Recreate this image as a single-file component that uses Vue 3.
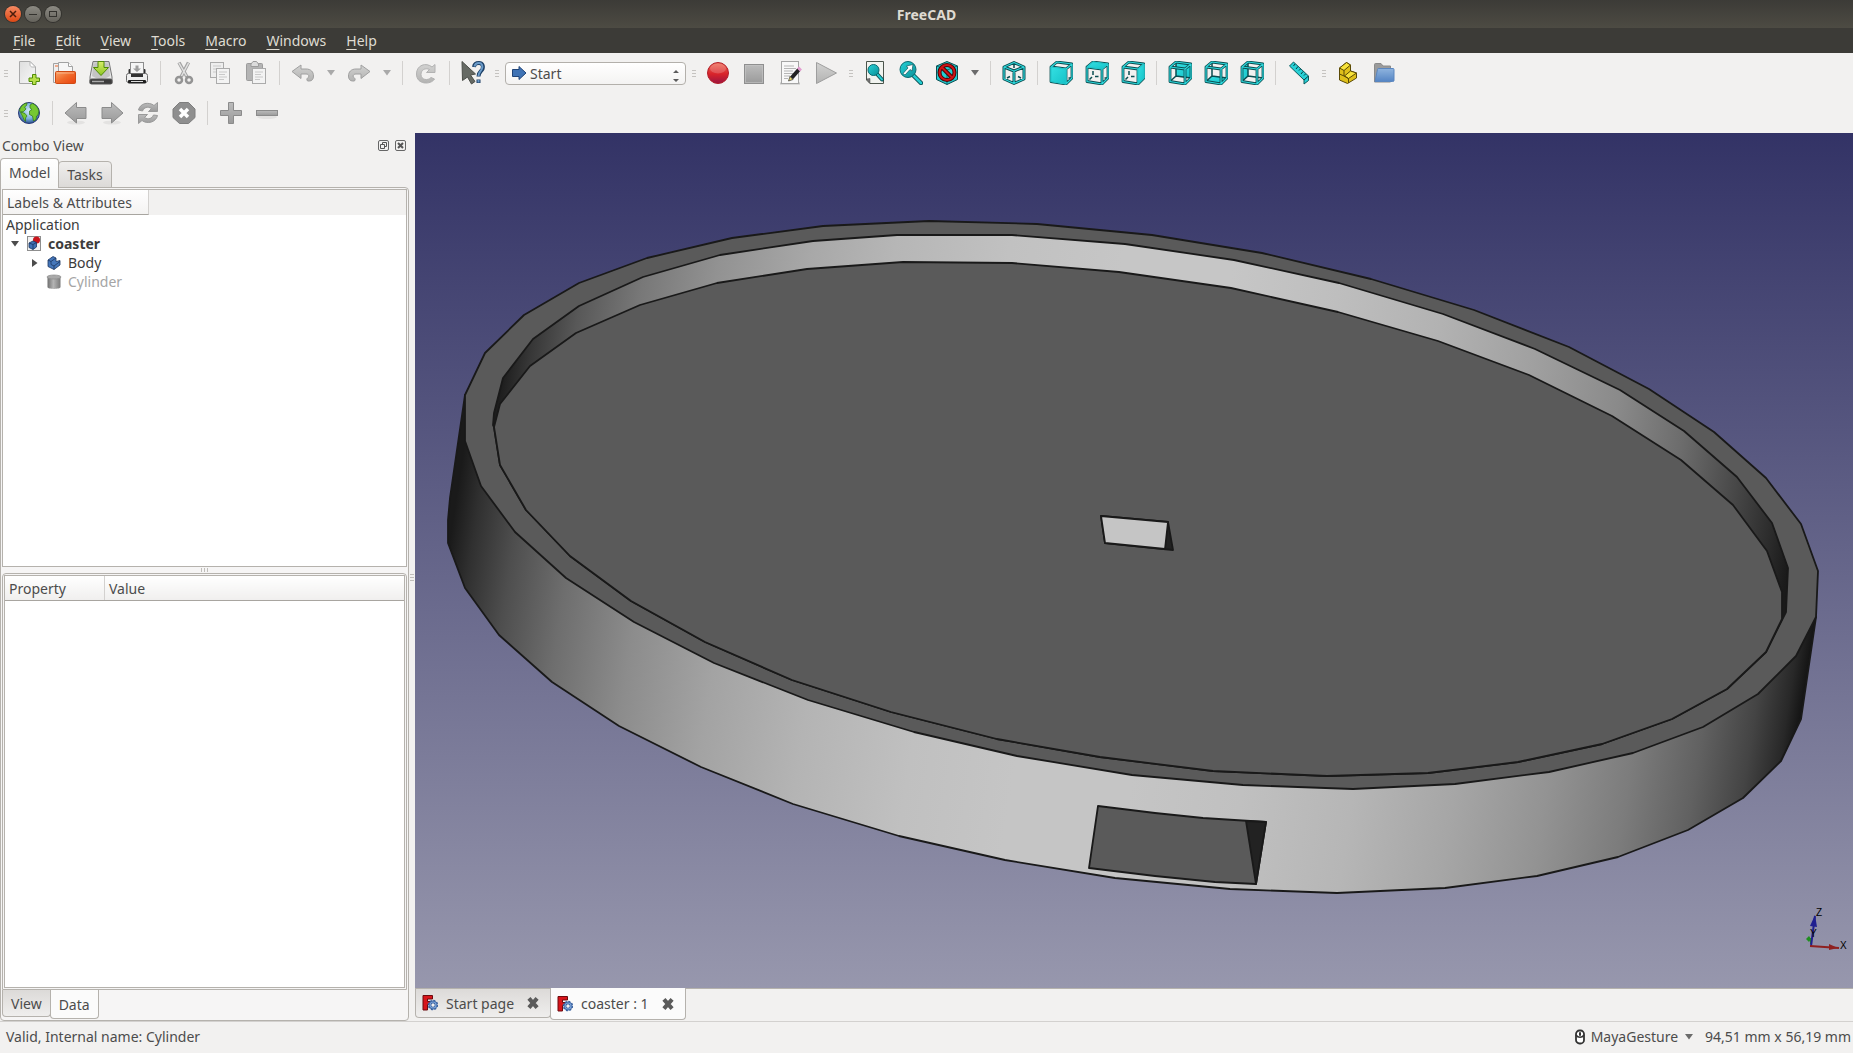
<script setup>
import { ref } from 'vue'

const menus = ['File', 'Edit', 'View', 'Tools', 'Macro', 'Windows', 'Help']

const fileTools = [
  { icon: 'new', label: 'New' }, { icon: 'open', label: 'Open' }, { icon: 'save', label: 'Save' }, { icon: 'print', label: 'Print' },
  { sep: true },
  { icon: 'cut', label: 'Cut' }, { icon: 'copy', label: 'Copy' }, { icon: 'paste', label: 'Paste' },
  { sep: true },
  { icon: 'undo', label: 'Undo' }, { drop: true, label: 'Undo history', pale: true },
  { icon: 'redo', label: 'Redo' }, { drop: true, label: 'Redo history', pale: true },
  { sep: true },
  { icon: 'refresh', label: 'Refresh' },
  { sep: true },
  { icon: 'whats', label: "What's this?" }
]
const viewTools = [
  { handle: true },
  { icon: 'record', label: 'Record macro' }, { icon: 'stop', label: 'Stop macro' }, { icon: 'edit', label: 'Macros' }, { icon: 'play', label: 'Execute macro' },
  { handle: true, wide: true },
  { icon: 'fitall', label: 'Fit all' }, { icon: 'fitsel', label: 'Fit selection' }, { icon: 'style', label: 'Draw style' }, { drop: true, label: 'Draw styles' },
  { sep: true },
  { icon: 'iso', label: 'Axonometric' },
  { sep: true },
  { icon: 'cube-front', label: 'Front' }, { icon: 'cube-top', label: 'Top' }, { icon: 'cube-right', label: 'Right' },
  { sep: true },
  { icon: 'cube-rear', label: 'Rear' }, { icon: 'cube-bottom', label: 'Bottom' }, { icon: 'cube-left', label: 'Left' },
  { sep: true },
  { icon: 'measure', label: 'Measure distance' },
  { handle: true, wide: true },
  { icon: 'part', label: 'Create part' }, { icon: 'folder', label: 'Create group' }
]
const webTools = [
  { handle: true },
  { icon: 'globe', label: 'Open website' },
  { sep: true },
  { icon: 'back', label: 'Previous page' }, { icon: 'forward', label: 'Next page' }, { icon: 'reload', label: 'Reload' }, { icon: 'halt', label: 'Stop loading' },
  { sep: true },
  { icon: 'plus', label: 'Zoom in' }, { icon: 'minus', label: 'Zoom out' }
]

const cubes = [
  { id: 'front', face: '2,6 17,8 17,23 2,20.5', over: true },
  { id: 'top', face: '2,6 8,1 23,3 17,8', over: true },
  { id: 'right', face: '17,8 23,3 23,17 17,23', over: true },
  { id: 'rear', face: '8,1 23,3 23,17 8,15' },
  { id: 'bottom', face: '2,20.5 8,15 23,17 17,23' },
  { id: 'left', face: '2,6 8,1 8,15 2,20.5' }
]
const wire = 'M2 6 L17 8 L17 23 L2 20.5 Z M2 6 L8 1 L23 3 L17 8 M23 3 L23 17 L17 23'
const hiddenWire = 'M8 1 V15 L23 17 M8 15 L2 20.5'
const stubs = 'M8 10 V14 M4.5 18.500 L7 16 M10 15.500 H13.500 M19.500 17 H22'

const outerTop = '465,395 485,353 524,315 579,283 647,258 732,238 823,226 929,221 1037,224 1152,235 1262,253 1371,279 1474,310 1569,347 1649,389 1714,432 1766,478 1801,524 1818,571 1816,617 1796,656 1758,694 1703,727 1633,753 1549,772 1455,784 1353,789 1243,785 1132,775 1017,756 914,732 808,700 714,663 634,622 566,578 515,532 481,486 465,441'
const outerSide = '465,395 450,498 448,520 448,543 465,588 499,635 552,682 619,726 701,767 793,804 899,836 1005,860 1115,878 1230,889 1337,893 1445,888 1537,876 1618,857 1688,830 1743,798 1781,761 1801,719 1816,617 1500,500'
const innerTop = '493,425 494,413 503,378 533,339 579,306 643,277 720,255 813,241 897,235 1012,235 1125,244 1234,260 1339,283 1443,314 1535,349 1620,390 1684,431 1737,477 1772,523 1788,568 1786,612 1766,652 1727,689 1672,719 1602,744 1518,762 1428,773 1327,776 1213,771 1100,757 997,739 891,712 792,680 705,642 631,601 570,556 526,510 500,465 494,427'
const floor = '494,427 500,404 530,366 576,333 640,305 717,283 807,269 903,262 1012,263 1119,272 1231,288 1338,312 1438,341 1529,375 1612,416 1681,460 1733,505 1767,551 1782,592 1782,619 1766,652 1727,689 1672,719 1602,744 1518,762 1428,773 1327,776 1213,771 1100,757 997,739 891,712 792,680 705,642 631,601 570,556 526,510 500,465'

const toStops = (from, to, list) => list.map(([x, c]) => ({ at: (x - from) / (to - from), color: `rgb(${c},${c},${c})` }))
const outerStops = toStops(533, 1911, [[533, 26], [556, 48], [597, 78], [655, 110], [730, 140], [816, 163], [916, 180], [1027, 192], [1133, 197], [1251, 197], [1364, 192], [1475, 182], [1576, 166], [1668, 147], [1749, 124], [1815, 97], [1865, 68], [1897, 40], [1911, 20]])
const innerStops = toStops(561, 1875, [[561, 30], [585, 55], [626, 88], [686, 120], [759, 146], [850, 168], [933, 182], [1048, 193], [1163, 198], [1274, 198], [1383, 190], [1491, 178], [1589, 160], [1680, 138], [1750, 108], [1810, 72], [1852, 44], [1875, 26]])

const workbench = ref('Start')
</script>

<template>
  <svg class="sprite" aria-hidden="true">
    <defs>
      <linearGradient id="g-paper" x1="0" y1="0" x2="1" y2="1"><stop offset="0" stop-color="#dedede" /><stop offset="1" stop-color="#f8f8f8" /></linearGradient>
      <linearGradient id="g-orange" x1="0" y1="0" x2="1" y2="1"><stop offset="0" stop-color="#f9a46a" /><stop offset="0.5" stop-color="#f0692a" /><stop offset="1" stop-color="#e8420f" /></linearGradient>
      <linearGradient id="g-grey" x1="0" y1="0" x2="0" y2="1"><stop offset="0" stop-color="#bcbcbc" /><stop offset="1" stop-color="#9a9a9a" /></linearGradient>
      <linearGradient id="g-light" x1="0" y1="0" x2="0" y2="1"><stop offset="0" stop-color="#d2d2d1" /><stop offset="1" stop-color="#b3b3b2" /></linearGradient>
      <linearGradient id="g-drive" x1="0" y1="0" x2="0" y2="1"><stop offset="0" stop-color="#d0d0d0" /><stop offset="1" stop-color="#f1f1f1" /></linearGradient>
      <linearGradient id="g-green" x1="0" y1="0" x2="0" y2="1"><stop offset="0" stop-color="#d9ee6a" /><stop offset="1" stop-color="#8cc521" /></linearGradient>
      <linearGradient id="g-red" x1="0" y1="0" x2="0" y2="1"><stop offset="0" stop-color="#ee6a55" /><stop offset="0.55" stop-color="#d8232a" /><stop offset="1" stop-color="#9c1440" /></linearGradient>
      <linearGradient id="g-cyan" x1="0" y1="0" x2="1" y2="1"><stop offset="0" stop-color="#34e0e2" /><stop offset="1" stop-color="#15c2c8" /></linearGradient>
      <linearGradient id="g-lens" x1="0" y1="0" x2="1" y2="1"><stop offset="0" stop-color="#26d3d8" /><stop offset="1" stop-color="#0b8f97" /></linearGradient>
      <linearGradient id="g-blue" x1="0" y1="0" x2="0" y2="1"><stop offset="0" stop-color="#8fb4de" /><stop offset="1" stop-color="#5585c4" /></linearGradient>
      <linearGradient id="g-can" x1="0" y1="0" x2="1" y2="0"><stop offset="0" stop-color="#6f6f6f" /><stop offset="0.45" stop-color="#b4b4b4" /><stop offset="1" stop-color="#7a7a7a" /></linearGradient>
      <radialGradient id="g-sea" cx="0.5" cy="0.4" r="0.6"><stop offset="0" stop-color="#d3e8f7" /><stop offset="0.6" stop-color="#7fb2de" /><stop offset="1" stop-color="#27508f" /></radialGradient>
    </defs>

    <symbol id="i-new" viewBox="0 0 24 24">
      <path d="M2.500.5H13L18.500 6V22.500H2.500Z" fill="url(#g-paper)" stroke="#a9a9a9" />
      <path d="M13 .5V3.500C13 5 14 6 15.500 6H18.500Z" fill="#fff" stroke="#b5b5b5" />
      <path d="M15.500 13.500h3.500v3.500h3.500v3.500h-3.500v3h-3.500v-3h-3.500v-3.500h3.500z" fill="#b9e04a" stroke="#4f8b07" />
    </symbol>
    <symbol id="i-open" viewBox="0 0 24 24">
      <path d="M.5 2.500H8V21.500H.5Z" fill="#efefef" stroke="#a2a2a2" />
      <path d="M5.500 1.500H15.500L19.500 5.500V14H5.500Z" fill="#f6f6f6" stroke="#a2a2a2" />
      <path d="M15.500 1.500V5.500H19.500" fill="#fff" stroke="#a2a2a2" /><path d="M2 5h3" stroke="#f0692a" />
      <rect x="2.500" y="10.500" width="20" height="12" rx="1" fill="url(#g-orange)" stroke="#cf4a14" />
      <path d="M4 12h17" stroke="#fcc9a5" stroke-opacity="0.7" />
    </symbol>
    <symbol id="i-save" viewBox="0 0 24 24">
      <path d="M4 .5H20L23 16V22.500H1V16Z" fill="url(#g-drive)" stroke="#777" />
      <path d="M4.500 3C10 1 14 1 19.500 3L21 15C15 19 9 19 3 15Z" fill="#c4c4c4" />
      <rect x="1" y="18" width="22" height="5" rx="1.500" fill="#3c3c3c" stroke="#555" /><path d="M3 20.500h12" stroke="#aaa" stroke-width="1.500" />
      <path d="M9 .5h6v6h4.500L12 14.500L4.500 6.500H9Z" fill="url(#g-green)" stroke="#4f8b07" />
    </symbol>
    <symbol id="i-print" viewBox="0 0 24 24">
      <rect x="3.500" y="8" width="17" height="8" rx="1" fill="#2f2f2f" /><rect x="5.500" y="1.500" width="13" height="12" fill="#f5f5f5" stroke="#8d8d8d" />
      <path d="M10.500 4.500h3v3h2.500L12 11L8 7.500h2.500z" fill="#9d9d9d" />
      <rect x="1.500" y="12.500" width="21" height="9" rx="2" fill="#efefef" stroke="#6a6a6a" />
      <path d="M6 13h12v3H6z" fill="#333" /><rect x="3" y="19" width="18" height="3.500" rx="1" fill="#1f1f1f" /><path d="M6 20.500h12" stroke="#ddd" />
    </symbol>
    <symbol id="i-cut" viewBox="0 0 24 24">
      <path d="M7 1.500L15 16M16.500 1.500L9 16" stroke="#a3a3a3" stroke-width="3.500" /><path d="M7 2L14.500 15M16.500 2L9.500 15" stroke="#e2e2e2" stroke-width="1.500" />
      <circle cx="7" cy="19" r="3" fill="none" stroke="#949494" stroke-width="2.500" /><circle cx="17" cy="19" r="3" fill="none" stroke="#949494" stroke-width="2.500" />
    </symbol>
    <symbol id="i-copy" viewBox="0 0 24 24">
      <rect x="2.500" y="1.500" width="13" height="15" fill="#eee" stroke="#ababab" /><path d="M5 5h8M5 8h8M5 11h8" stroke="#c9c9c9" />
      <rect x="8.500" y="7.500" width="13" height="15" fill="#f3f3f3" stroke="#ababab" /><path d="M11 11h8M11 13.500h6M11 16h8M11 18.500h5" stroke="#c9c9c9" />
    </symbol>
    <symbol id="i-paste" viewBox="0 0 24 24">
      <rect x="2.500" y="2.500" width="16" height="17" rx="1" fill="#b4b4b4" stroke="#9c9c9c" /><path d="M7 5.500V3L9 .5H12.500L14.500 3V5.500Z" fill="#dcdcdc" stroke="#9c9c9c" />
      <rect x="8.500" y="7.500" width="13" height="15" fill="#f3f3f3" stroke="#ababab" /><path d="M11 11h8M11 13.500h6M11 16h8M11 18.500h5" stroke="#c9c9c9" />
    </symbol>
    <symbol id="i-undo" viewBox="0 0 24 24">
      <path d="M1 10.500L10 4V8H15C20 8 22.500 11 22.500 15C22.500 18 21 20 18.500 20H17C15.500 20 15.500 17.500 17 16.500C18.500 15.500 18 13 15 13H10V17.500Z" fill="url(#g-light)" stroke="#a0a0a0" stroke-linejoin="round" />
    </symbol>
    <symbol id="i-redo" viewBox="0 0 24 24">
      <path d="M23 10.500L14 4V8H9C4 8 1.500 11 1.500 15C1.500 18 3 20 5.500 20H7C8.500 20 8.500 17.500 7 16.500C5.500 15.500 6 13 9 13H14V17.500Z" fill="url(#g-light)" stroke="#a0a0a0" stroke-linejoin="round" />
    </symbol>
    <symbol id="i-refresh" viewBox="0 0 24 24">
      <path d="M21 3.500V11.500H12.500L15.500 8.500C11 6.500 7 9 7 13.500C7 19 14 20 17 16.500L20.500 18C17 24 2.500 24 2.500 13C2.500 4 12 1 18 6Z" fill="url(#g-light)" stroke="#b2b2b2" stroke-linejoin="round" />
    </symbol>
    <symbol id="i-whats" viewBox="0 0 24 24">
      <path d="M1 .5L14.500 13L9.500 14L14 20.500L10.500 23L6.500 16L1.500 19.500Z" fill="#666a64" stroke="#4b4e49" />
      <path d="M13 6C13.500 2 16 2 18 2C21.500 2 22.500 5 21.500 8C20.500 10.500 17.500 11 17.500 15.500M17.500 18.500V22" fill="none" stroke="#1c3f66" stroke-width="4" /><path d="M13.500 5.500C14 2.500 16 2 18 2C21 2 22 5 21 7.500C20 10.500 17.500 11 17.500 15M17.500 19V21.500" fill="none" stroke="#6b9bc9" stroke-width="2" />
    </symbol>
    <symbol id="i-record" viewBox="0 0 24 24">
      <circle cx="12" cy="12" r="10.500" fill="url(#g-red)" stroke="#b3202a" /><ellipse cx="12" cy="7.500" rx="8" ry="5" fill="#fff" fill-opacity="0.18" />
    </symbol>
    <symbol id="i-stop" viewBox="0 0 24 24"><rect x="2.500" y="3.500" width="19" height="19" fill="url(#g-grey)" stroke="#8f8f8f" /><rect x="3.500" y="4.500" width="17" height="17" fill="none" stroke="#c6c6c6" stroke-opacity="0.6" /></symbol>
    <symbol id="i-edit" viewBox="0 0 24 24">
      <path d="M2 22.500h20" stroke="#c2c2c2" stroke-width="2" /><rect x="3.500" y=".5" width="17" height="22" fill="#f8f8f8" stroke="#a5a5a5" />
      <path d="M6 5h10M6 7.500h12M6 10h9M6 12.500h11M6 15h6M6 17.500h4" stroke="#b5b5b5" />
      <path d="M13.500 17L21 8.500" stroke="#222" stroke-width="4" /><path d="M20.500 9L22.500 7" stroke="#e39bd0" stroke-width="4" /><path d="M10.500 20L12 15.500L15 18.500Z" fill="#eedc6a" stroke="#333" stroke-width="0.700" />
    </symbol>
    <symbol id="i-play" viewBox="0 0 24 24"><path d="M2.500 1.500L22.500 12L2.500 22.500Z" fill="url(#g-light)" stroke="#9e9e9e" /></symbol>
    <symbol id="i-fitall" viewBox="0 0 24 24">
      <path d="M3.500.5H20.500V22.500H7L3.500 19Z" fill="#f1f3ef" stroke="#4b544b" /><path d="M3.500 18L7 17.500V22.500Z" fill="#777" stroke="#444" stroke-width="0.500" />
      <path d="M14 13L19 18.500" stroke="#0a4d50" stroke-width="4" stroke-linecap="round" /><path d="M14 13L19 18.500" stroke="#24cbd0" stroke-width="2" stroke-linecap="round" />
      <circle cx="10.500" cy="9" r="5.500" fill="url(#g-lens)" stroke="#0a6a70" />
    </symbol>
    <symbol id="i-fitsel" viewBox="0 0 24 24">
      <path d="M13.500 13.500L22 22" stroke="#0a4d50" stroke-width="4.500" stroke-linecap="round" /><path d="M13.500 13.500L22 22" stroke="#24cbd0" stroke-width="2.500" stroke-linecap="round" />
      <circle cx="9" cy="8.500" r="8" fill="url(#g-lens)" stroke="#0a6a70" /><path d="M4 12.500L9 7L7.500 5L14 3.500L13 10L11 8.500L6 14Z" fill="#fff" stroke="#17585c" stroke-width="0.700" />
    </symbol>
    <symbol id="i-style" viewBox="0 0 24 24">
      <path d="M1.500 5L12 .5L22.500 5V18.500L12 23.500L1.500 18.500Z" fill="#22cdd2" stroke="#0a4d50" /><path d="M1.500 5L12 9L22.500 5M12 9V23.500" stroke="#0a6a70" fill="none" />
      <circle cx="12" cy="11.500" r="7.500" fill="none" stroke="#4a0505" stroke-width="4" /><path d="M7 6.500L17 16.500" stroke="#4a0505" stroke-width="4" />
      <circle cx="12" cy="11.500" r="7.500" fill="none" stroke="#cf1218" stroke-width="2" /><path d="M7 6.500L17 16.500" stroke="#cf1218" stroke-width="2" />
    </symbol>
    <symbol id="i-iso" viewBox="0 0 24 24">
      <g fill="none" stroke-linejoin="round"><path d="M2 6L12 1.500L22 6V18L12 22.500L2 18ZM2 6L12 10L22 6M12 10V22.500" stroke="#0a4d50" stroke-width="3" /><path d="M12 4V7M5 17L8 15.500M19 17L16 15.500" stroke="#0a4d50" stroke-width="1.500" /><path d="M2 6L12 1.500L22 6V18L12 22.500L2 18ZM2 6L12 10L22 6M12 10V22.500" stroke="#2ed8dc" stroke-width="1.200" /></g>
    </symbol>
    <symbol v-for="c in cubes" :id="'i-cube-' + c.id" :key="c.id" viewBox="0 0 24 24">
      <g fill="none" stroke-linejoin="round">
        <template v-if="!c.over">
          <polygon :points="c.face" fill="url(#g-cyan)" />
          <path :d="hiddenWire" stroke="#0a4d50" stroke-width="1.500" />
        </template>
        <path v-else :d="stubs" stroke="#0a4d50" stroke-width="1.500" />
        <path :d="wire" stroke="#0a4d50" stroke-width="2.800" />
        <path :d="wire" stroke="#2ed8dc" stroke-width="1.200" />
        <polygon v-if="c.over" :points="c.face" fill="url(#g-cyan)" stroke="#22c4c9" />
      </g>
    </symbol>
    <symbol id="i-measure" viewBox="0 0 24 24">
      <path d="M2.500 5L6.500 1L21.500 15V19.500L17 23V19Z" fill="#27d0d5" stroke="#0a5a5f" /><path d="M17 19L21.500 15M8 3L6.500 5M11 5.500L9 8M13.500 8L12 9.500M16 10.500L14 13M18.500 13L17 14.500" stroke="#0a3d40" />
    </symbol>
    <symbol id="i-part" viewBox="0 0 24 24">
      <g fill="#f7e23a" stroke="#5b4a05" stroke-linejoin="round"><path d="M3.500 7L10.500 1.500L14.500 4V10L20.500 12V17L11.500 22.500L3.500 19Z" fill="#dfc01a" /><path d="M3.500 7L10.500 1.500L14.500 4L8 9.500Z" /><path d="M8.500 15L14.500 10L20.500 12L12.500 17.500Z" /><path d="M8 9.500V15L12.500 17.500V22M3.500 13L8 15" fill="none" /></g>
    </symbol>
    <symbol id="i-folder" viewBox="0 0 24 24">
      <path d="M2.500 21V3.500C2.500 2.500 3 2.500 4 2.500H9L11 5H18.500V21Z" fill="#9b9b9b" stroke="#8a8a8a" /><path d="M5.500 8.500C5.500 7.500 6 7.500 7 7.500H21C22 7.500 22 8 22 9V19C22 20.500 21.500 20.500 20.500 20.500H3Z" fill="url(#g-blue)" stroke="#5a86bf" />
    </symbol>
    <symbol id="i-globe" viewBox="0 0 24 24">
      <circle cx="12" cy="12" r="10.500" fill="url(#g-sea)" stroke="#2a3a78" />
      <path d="M2.500 9C4 5 6.500 2.500 10 2L9.500 4.500L7.500 6L9 8L6.500 10.500L4 11L8 12.500L10 15L8.500 17L8.500 20.500C6 18 6 15 4.500 13.500Z" fill="#76c832" stroke="#2f7412" stroke-width="0.700" />
      <path d="M13 4L15.500 2.500C19 4 21 6.500 21.800 10L21 14L19.500 15L19 18.500L16.500 20L15.500 15L12.500 13.500L12.500 10L15 8.500L13 7Z" fill="#76c832" stroke="#2f7412" stroke-width="0.700" />
    </symbol>
    <symbol id="i-back" viewBox="0 0 24 24"><ellipse cx="12" cy="21.500" rx="9" ry="2" fill="#000" fill-opacity="0.06" /><path d="M1 12L12.500 1.500V6.500H22V17.500H12.500V22Z" fill="url(#g-grey)" stroke="#8b8b8b" /></symbol>
    <symbol id="i-forward" viewBox="0 0 24 24"><ellipse cx="12" cy="21.500" rx="9" ry="2" fill="#000" fill-opacity="0.06" /><path d="M23 12L11.500 1.500V6.500H2V17.500H11.500V22Z" fill="url(#g-grey)" stroke="#8b8b8b" /></symbol>
    <symbol id="i-reload" viewBox="0 0 24 24">
      <g fill="url(#g-grey)" stroke="#9a9a9a" stroke-linejoin="round"><path d="M2.500 9C4 2 13 .5 18 4.500L21.500 1.500V10.500H12.500L15.500 7.500C11.500 5 8 6.500 6.500 10Z" /><path d="M21.500 14.500C20 21.500 11 23.500 6 19.500L2.500 22.500V13.500H11.500L8.500 16.500C12.500 19 16 17.500 17.500 14Z" /></g>
    </symbol>
    <symbol id="i-halt" viewBox="0 0 24 24"><path d="M7.500 1.500H16.500L23 8V16.500L16.500 22.500H7.500L1 16.500V8Z" fill="#8f8f8f" stroke="#7e7e7e" /><path d="M8 8L16 16M16 8L8 16" stroke="#fff" stroke-width="3.500" /></symbol>
    <symbol id="i-plus" viewBox="0 0 24 24"><path d="M9.500 1.500h5v8h8v5h-8v8h-5v-8h-8v-5h8z" fill="url(#g-grey)" stroke="#8b8b8b" /></symbol>
    <symbol id="i-minus" viewBox="0 0 24 24"><ellipse cx="12" cy="16" rx="10" ry="2" fill="#000" fill-opacity="0.06" /><rect x="1.500" y="9.500" width="21" height="5" fill="url(#g-grey)" stroke="#8b8b8b" /></symbol>
    <symbol id="i-go" viewBox="0 0 16 16"><path d="M1.500 4.500H8V1.500L15 8L8 14.500V11.500H1.500Z" fill="#3f73b5" stroke="#1f4478" /></symbol>
    <symbol id="i-logo" viewBox="0 0 16 16">
      <path d="M1 .5H10.500V4H5.500V6.500H9V9.500H5.500V15H1Z" fill="#d8151b" stroke="#6d0b0e" />
      <circle cx="11" cy="10" r="3" fill="none" stroke="#3a62a0" stroke-width="3" /><circle cx="11" cy="10" r="4.500" fill="none" stroke="#3a62a0" stroke-width="1.500" stroke-dasharray="2 1.500" /><circle cx="11" cy="10" r="3" fill="none" stroke="#7ba3d8" stroke-width="1.200" /><circle cx="11" cy="10" r="1.500" fill="#f2f1f0" />
    </symbol>
    <symbol id="i-doc" viewBox="0 0 16 16">
      <rect x="1.500" y=".5" width="13" height="14" fill="#f2f2f2" stroke="#8e8e8e" /><circle cx="10.500" cy="4" r="3.500" fill="#c9141b" />
      <path d="M3 7L7 5L10.500 6.500V11L7 13.500L3 11.500Z" fill="#3f70b4" stroke="#1b3560" stroke-width="0.800" /><path d="M3 7L7 8.500L10.500 6.500M7 8.500V13.500" fill="none" stroke="#1b3560" stroke-width="0.800" />
    </symbol>
    <symbol id="i-body" viewBox="0 0 16 16">
      <path d="M2 5L7 1.500L10 3V6.500L14 5.500V10L8 14.500L2 11.500Z" fill="#4577bb" stroke="#1b3560" stroke-width="0.800" stroke-linejoin="round" /><path d="M2 5L5 6.500L10 3M5 6.500V9.500L8 11L14 6.500M8 11V14.500" fill="none" stroke="#1b3560" stroke-width="0.800" />
    </symbol>
    <symbol id="i-can" viewBox="0 0 16 16"><path d="M1.500 3V13C1.500 15.500 14.500 15.500 14.500 13V3Z" fill="url(#g-can)" /><ellipse cx="8" cy="3" rx="7" ry="2" fill="#a9a9a9" stroke="#8b8b8b" stroke-width="0.700" /></symbol>
    <symbol id="i-cross" viewBox="0 0 12 12"><path d="M2.500 2L9.500 10M9.500 2L2.500 10" stroke="#5b5b5b" stroke-width="3.500" /></symbol>
    <symbol id="i-down" viewBox="0 0 8 6"><path d="M0 0H8L4 5.500Z" fill="currentColor" /></symbol>
    <symbol id="i-mouse" viewBox="0 0 12 16"><rect x="2" y="1.500" width="8" height="13" rx="3.500" fill="#fff" stroke="#333" stroke-width="1.800" /><path d="M2 6C4 9 8 9 10 6" fill="none" stroke="#333" stroke-width="1.500" /><rect x="5" y="3" width="2" height="4" rx="1" fill="#333" /></symbol>
  </svg>

  <div class="window">
    <header class="titlebar">
      <div class="winbuttons">
        <button class="wb close" aria-label="Close window"><svg viewBox="0 0 16 16"><path d="M5 5L11 11M11 5L5 11" stroke="#4a1d0c" stroke-width="1.500" /></svg></button>
        <button class="wb" aria-label="Minimize window"><svg viewBox="0 0 16 16"><path d="M4 8.500H12" stroke="#33322e" /></svg></button>
        <button class="wb" aria-label="Maximize window"><svg viewBox="0 0 16 16"><rect x="4.500" y="5.500" width="7" height="5" fill="none" stroke="#33322e" /></svg></button>
      </div>
      <h1>FreeCAD</h1>
    </header>

    <nav class="menubar">
      <button v-for="m in menus" :key="m"><u>{{ m[0] }}</u>{{ m.slice(1) }}</button>
    </nav>

    <div class="toolbars">
      <div class="toolbar" role="toolbar" aria-label="File">
        <span class="handle first"></span>
        <template v-for="(t, i) in fileTools" :key="i">
          <span v-if="t.sep" class="sep"></span>
          <button v-else-if="t.drop" class="drop" :class="{ pale: t.pale }" :aria-label="t.label"><svg><use href="#i-down" /></svg></button>
          <button v-else class="tool" :aria-label="t.label"><svg><use :href="'#i-' + t.icon" /></svg></button>
        </template>
        <span class="handle"></span>
        <div class="combo">
          <svg class="combo-icon"><use href="#i-go" /></svg>
          <select v-model="workbench" aria-label="Workbench"><option>Start</option></select>
          <svg class="combo-arrows" viewBox="0 0 8 14"><path d="M1 4L4 1L7 4ZM1 10H7L4 13Z" fill="#5b5b5b" /></svg>
        </div>
        <template v-for="(t, i) in viewTools" :key="'v' + i">
          <span v-if="t.sep" class="sep"></span>
          <span v-else-if="t.handle" class="handle" :class="{ wide: t.wide }"></span>
          <button v-else-if="t.drop" class="drop" :aria-label="t.label"><svg><use href="#i-down" /></svg></button>
          <button v-else class="tool" :aria-label="t.label"><svg><use :href="'#i-' + t.icon" /></svg></button>
        </template>
      </div>
      <div class="toolbar" role="toolbar" aria-label="Navigation">
        <template v-for="(t, i) in webTools" :key="i">
          <span v-if="t.sep" class="sep"></span>
          <span v-else-if="t.handle" class="handle first"></span>
          <button v-else class="tool" :aria-label="t.label"><svg><use :href="'#i-' + t.icon" /></svg></button>
        </template>
      </div>
    </div>

    <main class="work">
      <aside class="dock">
        <div class="dock-title">
          <h2>Combo View</h2>
          <button aria-label="Float panel"><svg viewBox="0 0 11 11"><rect x=".5" y=".5" width="10" height="10" rx="1.500" fill="none" stroke="#666" /><path d="M4.500 4V2.500H8.500V6.500H7M2.500 4.500H6.500V8.500H2.500Z" fill="none" stroke="#555" /></svg></button>
          <button aria-label="Close panel"><svg viewBox="0 0 11 11"><rect x=".5" y=".5" width="10" height="10" rx="1.500" fill="none" stroke="#666" /><path d="M3 3L8 8M8 3L3 8" stroke="#555" stroke-width="2" /></svg></button>
        </div>
        <div class="tabs top" role="tablist">
          <button class="tab active" role="tab" aria-selected="true">Model</button>
          <button class="tab" role="tab" aria-selected="false">Tasks</button>
        </div>
        <div class="pane">
          <section class="tree">
            <div class="tree-head"><span>Labels &amp; Attributes</span></div>
            <ul>
              <li>Application</li>
              <li class="l1"><svg class="twist"><use href="#i-down" /></svg><svg class="node"><use href="#i-doc" /></svg><b>coaster</b></li>
              <li class="l2"><svg class="twist shut"><use href="#i-down" /></svg><svg class="node"><use href="#i-body" /></svg>Body</li>
              <li class="l2 off"><span class="twist"></span><svg class="node"><use href="#i-can" /></svg>Cylinder</li>
            </ul>
          </section>
          <div class="split"><i></i><i></i><i></i></div>
          <section class="props">
            <div class="props-box">
              <table>
                <thead><tr><th class="prop">Property</th><th>Value</th></tr></thead>
              </table>
            </div>
          </section>
          <div class="tabs bottom" role="tablist">
            <button class="tab" role="tab" aria-selected="false">View</button>
            <button class="tab active" role="tab" aria-selected="true">Data</button>
          </div>
        </div>
      </aside>

      <div class="vsplit"><i></i><i></i><i></i></div>

      <section class="mdi">
        <div class="view3d">
          <svg viewBox="415 133 1438 855" preserveAspectRatio="xMidYMid slice" role="img" aria-label="3D view of the coaster">
            <defs>
              <linearGradient id="side" gradientUnits="userSpaceOnUse" x1="533" y1="0" x2="1911" y2="0" gradientTransform="skewX(-8.750)"><stop v-for="s in outerStops" :key="s.at" :offset="s.at" :stop-color="s.color" /></linearGradient>
              <linearGradient id="wall" gradientUnits="userSpaceOnUse" x1="561" y1="0" x2="1875" y2="0" gradientTransform="skewX(-8.750)"><stop v-for="s in innerStops" :key="s.at" :offset="s.at" :stop-color="s.color" /></linearGradient>
            </defs>
            <g stroke="#191919" stroke-width="1.800" stroke-linejoin="round">
              <polygon :points="outerSide" fill="url(#side)" />
              <polygon :points="outerTop" fill="#5a5a5a" />
              <polygon :points="innerTop" fill="url(#wall)" />
              <polygon :points="floor" fill="#5a5a5a" />
              <path d="M1101 516L1168 522L1173 550L1105 543Z" fill="#222" />
              <path d="M1101 516L1168 522L1165 549L1105 543Z" fill="#c5c5c5" />
              <path d="M1098 806L1155 813L1203 818L1266 822L1256 884L1215 882L1155 876L1089 868Z" fill="#5a5a5a" />
              <path d="M1246 821L1266 822L1256 884Z" fill="#222" />
            </g>
            <g class="axes">
              <path d="M1811 944V938" stroke="#1f8f1f" stroke-width="2" /><path d="M1806 939L1809 936L1811 939L1809 942Z" fill="#1f8f1f" />
              <path d="M1811 946L1815 916" stroke="#202090" stroke-width="2" /><path d="M1810 926L1815 915L1817 927Z" fill="#202090" />
              <path d="M1810 946L1839 948" stroke="#8f2020" stroke-width="2" /><path d="M1829 944L1838 948L1829 950Z" fill="#8f2020" />
              <text x="1816" y="916">Z</text><text x="1810" y="937">Y</text><text x="1840" y="949">X</text>
            </g>
          </svg>
        </div>
        <div class="doctabs" role="tablist">
          <div class="doctab"><svg class="logo"><use href="#i-logo" /></svg><button role="tab" aria-selected="false">Start page</button><button class="x" aria-label="Close Start page"><svg><use href="#i-cross" /></svg></button></div>
          <div class="doctab active"><svg class="logo"><use href="#i-logo" /></svg><button role="tab" aria-selected="true">coaster : 1</button><button class="x" aria-label="Close coaster"><svg><use href="#i-cross" /></svg></button></div>
        </div>
      </section>
    </main>

    <footer class="status">
      <span class="message">Valid, Internal name: Cylinder</span>
      <button class="nav"><svg class="mouse"><use href="#i-mouse" /></svg>MayaGesture<svg class="caret"><use href="#i-down" /></svg></button>
      <span>94,51 mm x 56,19 mm</span>
    </footer>
  </div>
</template>

<style>
body { margin: 0; background: #f2f1f0; }
</style>

<style scoped>
.sprite { position: absolute; width: 0; height: 0; }
.window { display: flex; flex-direction: column; height: 100vh; overflow: hidden; background: #f2f1f0; color: #4c4c4c; font: 14px/19px "Noto Sans", "Open Sans", sans-serif; }
button { padding: 0; border: 0; background: none; color: inherit; font: inherit; }
svg { display: block; flex: none; }
h1, h2, ul { margin: 0; padding: 0; font: inherit; list-style: none; }

.titlebar { display: grid; grid-template-columns: 1fr auto 1fr; align-items: center; height: 28px; background: linear-gradient(#3c3b37, #4d4b43); color: #dfdbd2; }
.titlebar h1 { font-size: 14px; font-weight: 700; }
.winbuttons { display: flex; gap: 4px; padding-left: 5px; }
.wb { width: 16px; height: 16px; border-radius: 50%; background: linear-gradient(#8c8a83, #65635c); box-shadow: 0 0 0 1px #33322e; }
.wb.close { background: linear-gradient(#f58a63, #dd4814); }

.menubar { display: flex; gap: 20px; align-items: center; height: 25px; padding-left: 13px; background: #3c3b37; color: #dfdbd2; }
.menubar u { text-underline-offset: 3px; }

.toolbars { height: 80px; }
.toolbar { display: flex; align-items: center; height: 40px; }
.tool { display: flex; justify-content: center; width: 36px; }
.tool svg { width: 24px; height: 24px; }
.drop { display: flex; justify-content: center; width: 20px; color: #6b6b6b; }
.drop.pale { color: #a9a9a9; }
.drop svg { width: 8px; height: 6px; }
.sep { width: 1px; height: 24px; margin: 0 5px; background: #d3d1cf; }
.handle { flex: none; width: 4px; height: 7px; margin: 0 4px; background: repeating-linear-gradient(#c5c3c0 0 1px, transparent 1px 3px); }
.handle.first { margin: 0 3px 0 4px; }
.handle.wide { margin: 0 4px 0 5px; }
.combo { position: relative; margin: 0 2px; }
.combo select { display: block; width: 181px; height: 23px; padding: 0 24px 0 24px; border: 1px solid #b3b0ab; border-radius: 4px; appearance: none; background: linear-gradient(#fff, #f4f3f2); color: inherit; font: inherit; line-height: 19px; }
.combo-icon { position: absolute; left: 6px; top: 3px; width: 16px; height: 16px; }
.combo-arrows { position: absolute; right: 6px; top: 7px; width: 8px; height: 14px; }

.work { display: flex; flex: 1; min-height: 0; }
.dock { display: flex; flex-direction: column; width: 409px; flex: none; }
.dock-title { display: flex; gap: 6px; align-items: center; height: 25px; padding: 0 3px 0 2px; }
.dock-title h2 { flex: 1; }
.dock-title svg { width: 11px; height: 11px; }
.tabs { display: flex; }
.tabs.top { position: relative; z-index: 1; align-items: flex-end; height: 30px; margin-bottom: -1px; }
.tab { border: 1px solid #b5b2ad; }
.top .tab { height: 27px; padding: 0 8px 1px; margin: 0 0 0 -1px; border-radius: 4px 4px 0 0; background: linear-gradient(#efeeed, #dcdad8); }
.top .tab.active { height: 30px; padding: 0 8px 2px; margin: 0; border-bottom: 0; background: linear-gradient(#fff, #f7f7f6); }
.pane { display: flex; flex: 1; flex-direction: column; min-height: 0; padding: 1px; border: 1px solid #b5b2ad; border-radius: 0 4px 4px 4px; background: #f6f5f5; }
.tree { height: 376px; flex: none; border: 1px solid #b5b2ad; background: #fff; }
.tree-head { height: 25px; background: #f2f1f0; }
.tree-head span { display: inline-block; box-sizing: border-box; width: 146px; height: 25px; padding: 3px 4px 0; border-right: 1px solid #d3d1cf; border-bottom: 1px solid #a8a5a0; background: linear-gradient(#fff, #f4f3f2); }
.tree ul { color: #3c3c3c; }
.tree li { display: flex; align-items: center; height: 19px; padding-left: 3px; }
.tree li.l1 { padding-left: 8px; }
.tree li.l2 { padding-left: 28px; }
.tree li.off { color: #a5a5a5; }
.twist { width: 8px; height: 6px; color: #4c4c4c; }
.twist.shut { transform: rotate(-90deg); }
.node { width: 16px; height: 16px; margin: 0 6px 0 7px; }
.split { display: flex; gap: 2px; align-items: center; justify-content: center; height: 6px; flex: none; }
.split i { width: 1px; height: 4px; background: #c0beba; }
.props { flex: 1; min-height: 0; padding: 1px; border: 1px solid #b5b2ad; border-radius: 4px 4px 0 0; }
.props-box { box-sizing: border-box; height: 100%; border: 1px solid #b5b2ad; background: #fff; }
.props table { width: 100%; border-collapse: collapse; }
.props th { height: 24px; padding: 0 0 0 4px; border-bottom: 1px solid #a8a5a0; background: linear-gradient(#fff, #f0efee); font-weight: 400; text-align: left; }
.props th.prop { width: 95px; border-right: 1px solid #d3d1cf; }
.tabs.bottom { height: 29px; flex: none; align-items: flex-start; }
.bottom .tab { height: 27px; padding: 0 8px; border-top: 0; border-radius: 0 0 4px 4px; background: linear-gradient(#dcdad8, #efeeed); }
.bottom .tab.active { height: 29px; padding: 0 8px; margin: 0 0 0 -1px; background: #fbfbfb; }

.vsplit { display: flex; flex-direction: column; gap: 2px; align-items: center; justify-content: center; width: 6px; flex: none; }
.vsplit i { width: 4px; height: 1px; background: #c0beba; }

.mdi { display: flex; flex: 1; flex-direction: column; min-width: 0; }
.view3d { flex: 1; min-height: 0; border-bottom: 1px solid #b5b2ad; background: linear-gradient(#333366, #9797ad); }
.view3d svg { width: 100%; height: 100%; }
.axes text { fill: #000; font: 10px "Liberation Sans", sans-serif; }
.doctabs { display: flex; align-items: flex-start; height: 32px; flex: none; }
.doctab { display: flex; box-sizing: border-box; align-items: center; height: 29px; padding: 0 10px 0 6px; border: 1px solid #b5b2ad; border-top: 0; border-radius: 0 0 4px 4px; background: linear-gradient(#dcdad8, #efeeed); }
.doctab.active { height: 32px; margin: -1px 0 0 -1px; background: #fbfbfb; }
.logo { width: 16px; height: 16px; margin-right: 8px; }
.x { margin-left: 12px; }
.x svg { width: 14px; height: 14px; }

.status { display: flex; align-items: center; height: 29px; padding: 0 2px 2px 6px; border-top: 1px solid #d3d1cf; flex: none; }
.message { flex: 1; }
.nav { display: flex; align-items: center; margin-right: 12px; }
.mouse { width: 12px; height: 16px; margin-right: 5px; }
.caret { width: 8px; height: 6px; margin-left: 7px; color: #6b6b6b; }
</style>
